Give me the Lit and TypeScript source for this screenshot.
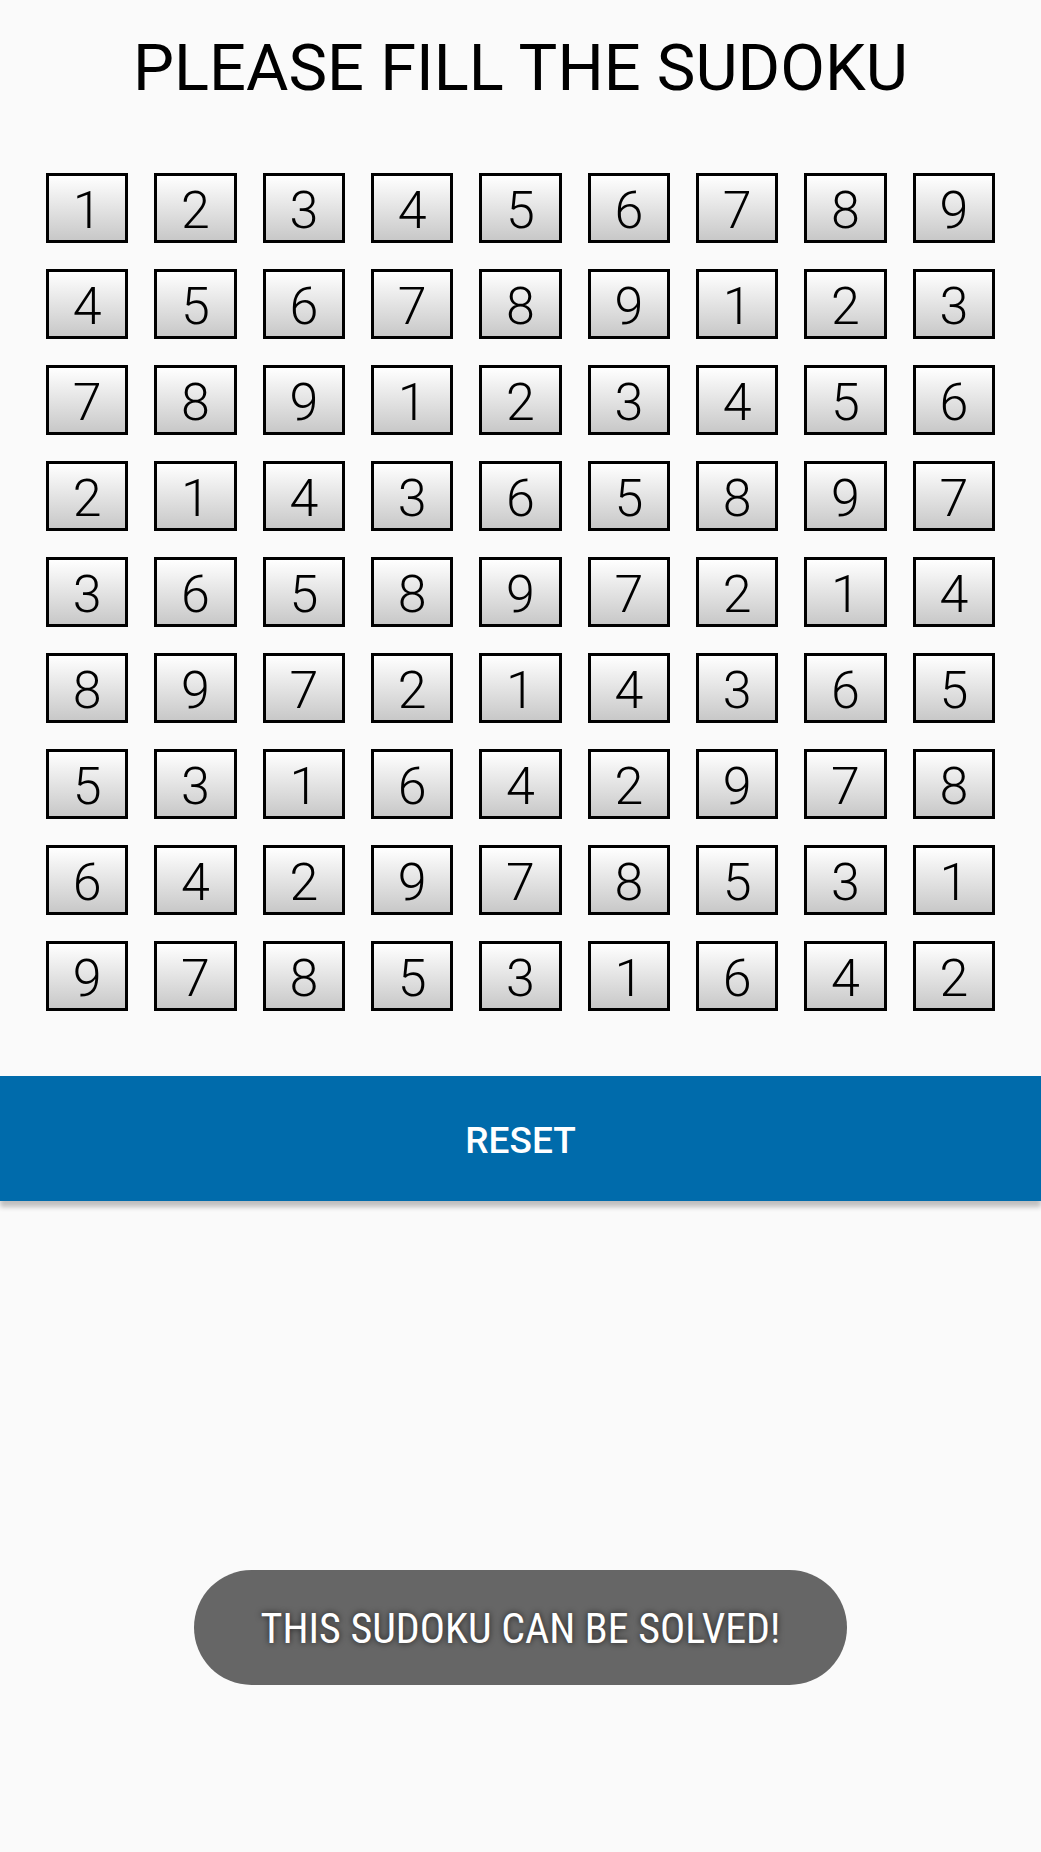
import { LitElement, html, css } from "lit";
import { customElement, state } from "lit/decorators.js";

const PUZZLE = [
  "123456789",
  "456789123",
  "789123456",
  "214365897",
  "365897214",
  "897214365",
  "531642978",
  "642978531",
  "978531642",
];

@customElement("app-root")
export class AppRoot extends LitElement {
  static styles = css`
    :host {
      display: block;
      font-family: Roboto, "Liberation Sans", sans-serif;
      color: #000;
      background: #fafafa;
    }
    .page {
      display: flex;
      flex-direction: column;
      min-height: 100vh;
      box-sizing: border-box;
      padding: 28px 0 167px;
    }
    .title {
      margin: 0;
      font-size: 65px;
      line-height: 80px;
      font-weight: 400;
      text-align: center;
    }
    .grid {
      display: grid;
      grid-template-columns: repeat(9, minmax(0, 1fr));
      gap: 26px;
      padding: 65px 46px;
    }
    .cell {
      box-sizing: border-box;
      width: 100%;
      height: 70px;
      margin: 0;
      padding: 4px 0 0;
      border: 3px solid #000;
      border-radius: 0;
      background: linear-gradient(#fff, #c8c8c8);
      color: #000;
      font-family: inherit;
      font-size: 52px;
      font-weight: 300;
      text-align: center;
      outline-offset: 2px;
    }
    .reset {
      height: 125px;
      margin: 0;
      padding: 4px 0 0;
      border: 0;
      background: #006bab;
      color: #fff;
      font-family: inherit;
      font-size: 37px;
      font-weight: 500;
      cursor: pointer;
      box-shadow: 0 6px 5px rgba(0, 0, 0, 0.24);
    }
    .toast {
      align-self: center;
      margin-top: auto;
      padding: 34px 67px 31px;
      border-radius: 58px;
      background: #666;
      color: #fff;
      font-family: "Roboto Condensed", Roboto, sans-serif;
      font-size: 42px;
      line-height: 50px;
      text-align: center;
      text-shadow: 0 0 6px rgba(0, 0, 0, 0.7);
    }
  `;

  @state() private values: string[][] = PUZZLE.map((row) => row.split(""));
  @state() private message = "THIS SUDOKU CAN BE SOLVED!";

  private setCell(row: number, col: number, event: Event) {
    const field = event.target as HTMLInputElement;
    const value = field.value.replace(/[^1-9]/g, "");
    field.value = value;
    this.values = this.values.map((line, r) =>
      line.map((old, c) => (r === row && c === col ? value : old)),
    );
  }

  private reset() {
    this.values = this.values.map((line) => line.map(() => ""));
    this.message = "";
  }

  render() {
    return html`
      <main class="page">
        <h1 class="title">PLEASE FILL THE SUDOKU</h1>
        <div class="grid">
          ${this.values.map((line, r) =>
            line.map(
              (value, c) => html`<input
                class="cell"
                type="text"
                inputmode="numeric"
                maxlength="1"
                aria-label="Row ${r + 1}, column ${c + 1}"
                .value=${value}
                @input=${(e: Event) => this.setCell(r, c, e)}
              />`,
            ),
          )}
        </div>
        <button class="reset" type="button" @click=${this.reset}>RESET</button>
        ${this.message
          ? html`<div class="toast" role="status">${this.message}</div>`
          : null}
      </main>
    `;
  }
}
